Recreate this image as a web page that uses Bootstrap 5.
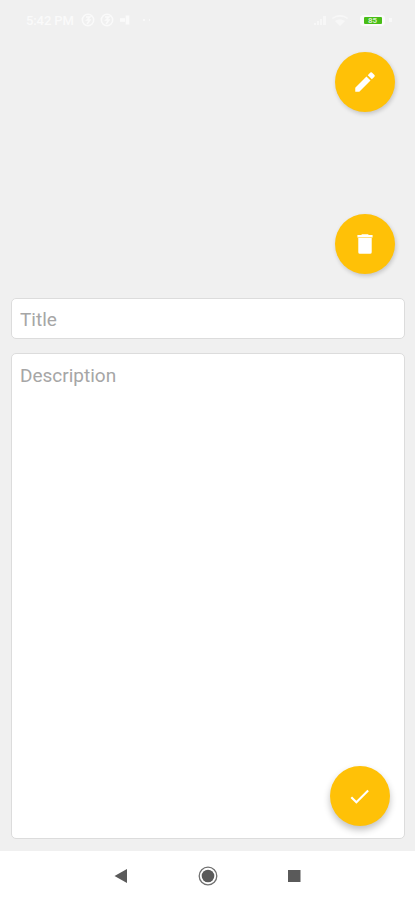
<!DOCTYPE html>
<html lang="en">
<head>
<meta charset="utf-8">
<meta name="viewport" content="width=device-width, initial-scale=1">
<title>Note editor</title>
<link href="https://cdn.jsdelivr.net/npm/bootstrap@5.3.0/dist/css/bootstrap.min.css" rel="stylesheet">
<style>
  body { background: #f0f0f0; font-family: Roboto, sans-serif; }
  .status { height: 40px; padding-left: 26px; padding-right: 23px; color: #fafafa; font-size: 13px; line-height: 1; }
  .status .time { width: 50px; font-weight: 500; letter-spacing: -.1px; }
  .battery { width: 25px; height: 11px; border-radius: 4px; background: #fafafa; }
  .charge { width: 18px; height: 7px; border-radius: 1px; background: #48bd16; color: #d5f0c8; font-size: 8px; font-weight: 700; line-height: 7px; }
  .tip { width: 3px; height: 4px; background: #f8f8f8; }
  .actions { height: 258px; padding: 12px 20.5px 24px 0; }
  .fab, .fab:hover { width: 60px; height: 60px; background: #ffc107; color: #fff; box-shadow: 1px 2px 4px rgba(0,0,0,.18); }
  .fab-raised, .fab-raised:hover { right: 15px; bottom: 13px; box-shadow: 0 4px 7px rgba(0,0,0,.24); }
  .note { padding: 0 10.5px 12px 11px; gap: 14px; }
  .note .form-control { border: 1px solid #dcdcdc; border-radius: 5px; padding: 7px 8px 5px; font-size: 19px; line-height: 29px; color: #555; resize: none; background: #fff; }
  .note .form-control::placeholder { color: #a6a6a6; opacity: 1; }
  .title-field { height: 41px; }
  .description-field { height: 100%; display: block; }
  .sysnav { height: 49px; background: #fff; }
</style>
<script src="https://cdn.jsdelivr.net/npm/bootstrap@5.3.0/dist/js/bootstrap.bundle.min.js"></script>
</head>
<body>
<div class="vh-100 d-flex flex-column overflow-hidden">
  <header class="status d-flex align-items-center flex-shrink-0">
    <span class="time text-nowrap">5:42 PM</span>
    <svg class="ms-1" width="70" height="14" viewBox="0 0 70 14" fill="none" stroke="#fafafa" stroke-width="1.5">
      <circle cx="8" cy="7" r="5.7"/><path d="M6 4h4L7 7h3l-3 4"/>
      <circle cx="27" cy="7" r="5.7"/><path d="M25 4h4L26 7h3l-3 4"/>
      <path d="M40 7h5M47.500 2.500v9" stroke-width="3.500"/><path d="M63 7h2M69 7h2"/>
    </svg>
    <svg class="ms-auto me-2" width="38" height="14" viewBox="0 0 38 14" fill="#f7f7f7">
      <path d="M0 12h2v-2H0zM3 12h2V8H3zM6 12h2V6H6zM9 12h3V3H9z"/>
      <path d="M18 5c5-4 11-4 16 0l-1 1c-4-3-10-3-14 0zM21 8c3-2 7-2 10 0l-5 5z"/>
    </svg>
    <span class="battery d-flex align-items-center justify-content-center"><span class="charge text-center">85</span></span>
    <span class="tip ms-1"></span>
  </header>

  <div class="actions d-flex flex-column align-items-end justify-content-between flex-shrink-0">
    <button type="button" class="btn fab rounded-circle border-0 p-0 d-flex align-items-center justify-content-center" aria-label="Edit">
      <svg width="26" height="26" viewBox="0 0 24 24" fill="currentColor"><path d="M3 17.250V21h3.750L17.100 10.650l-3.750-3.750L3 17.250zM20.710 7.040a1 1 0 0 0 0-1.410l-2.340-2.340a1 1 0 0 0-1.410 0l-2.400 2.400 3.750 3.750 2.400-2.400z"/></svg>
    </button>
    <button type="button" class="btn fab rounded-circle border-0 p-0 d-flex align-items-center justify-content-center" aria-label="Delete">
      <svg width="26" height="26" viewBox="0 0 24 24" fill="currentColor"><path d="M5.800 19.500a1.500 1.500 0 0 0 1.500 1.500h9.400a1.500 1.500 0 0 0 1.500-1.500V6.500H5.800v13zM19 3.700h-3.500l-.7-.7H9.200l-.7.7H5V6h14V3.700z"/></svg>
    </button>
  </div>

  <form class="note d-flex flex-column flex-grow-1 mb-0">
    <input type="text" class="form-control title-field flex-shrink-0" placeholder="Title" aria-label="Title">
    <div class="position-relative flex-grow-1">
      <textarea class="form-control description-field" placeholder="Description" aria-label="Description"></textarea>
      <button type="button" class="btn fab fab-raised position-absolute rounded-circle border-0 p-0 d-flex align-items-center justify-content-center" aria-label="Save">
        <svg width="25" height="25" viewBox="0 0 24 24" fill="currentColor"><path d="M9 16.170 4.830 12l-1.420 1.410L9 19 21 7l-1.410-1.410z"/></svg>
      </button>
    </div>
  </form>

  <nav class="sysnav flex-shrink-0 d-flex justify-content-center align-items-center">
    <svg width="190" height="24" viewBox="0 0 190 24" fill="#5a5a5a">
      <path d="M1.500 12 14 5v14z"/>
      <circle cx="95" cy="12" r="6.300"/><circle cx="95" cy="12" r="8.800" fill="none" stroke="#707070" stroke-width="1.300"/>
      <rect x="175" y="6" width="12.500" height="12"/>
    </svg>
  </nav>
</div>
</body>
</html>
